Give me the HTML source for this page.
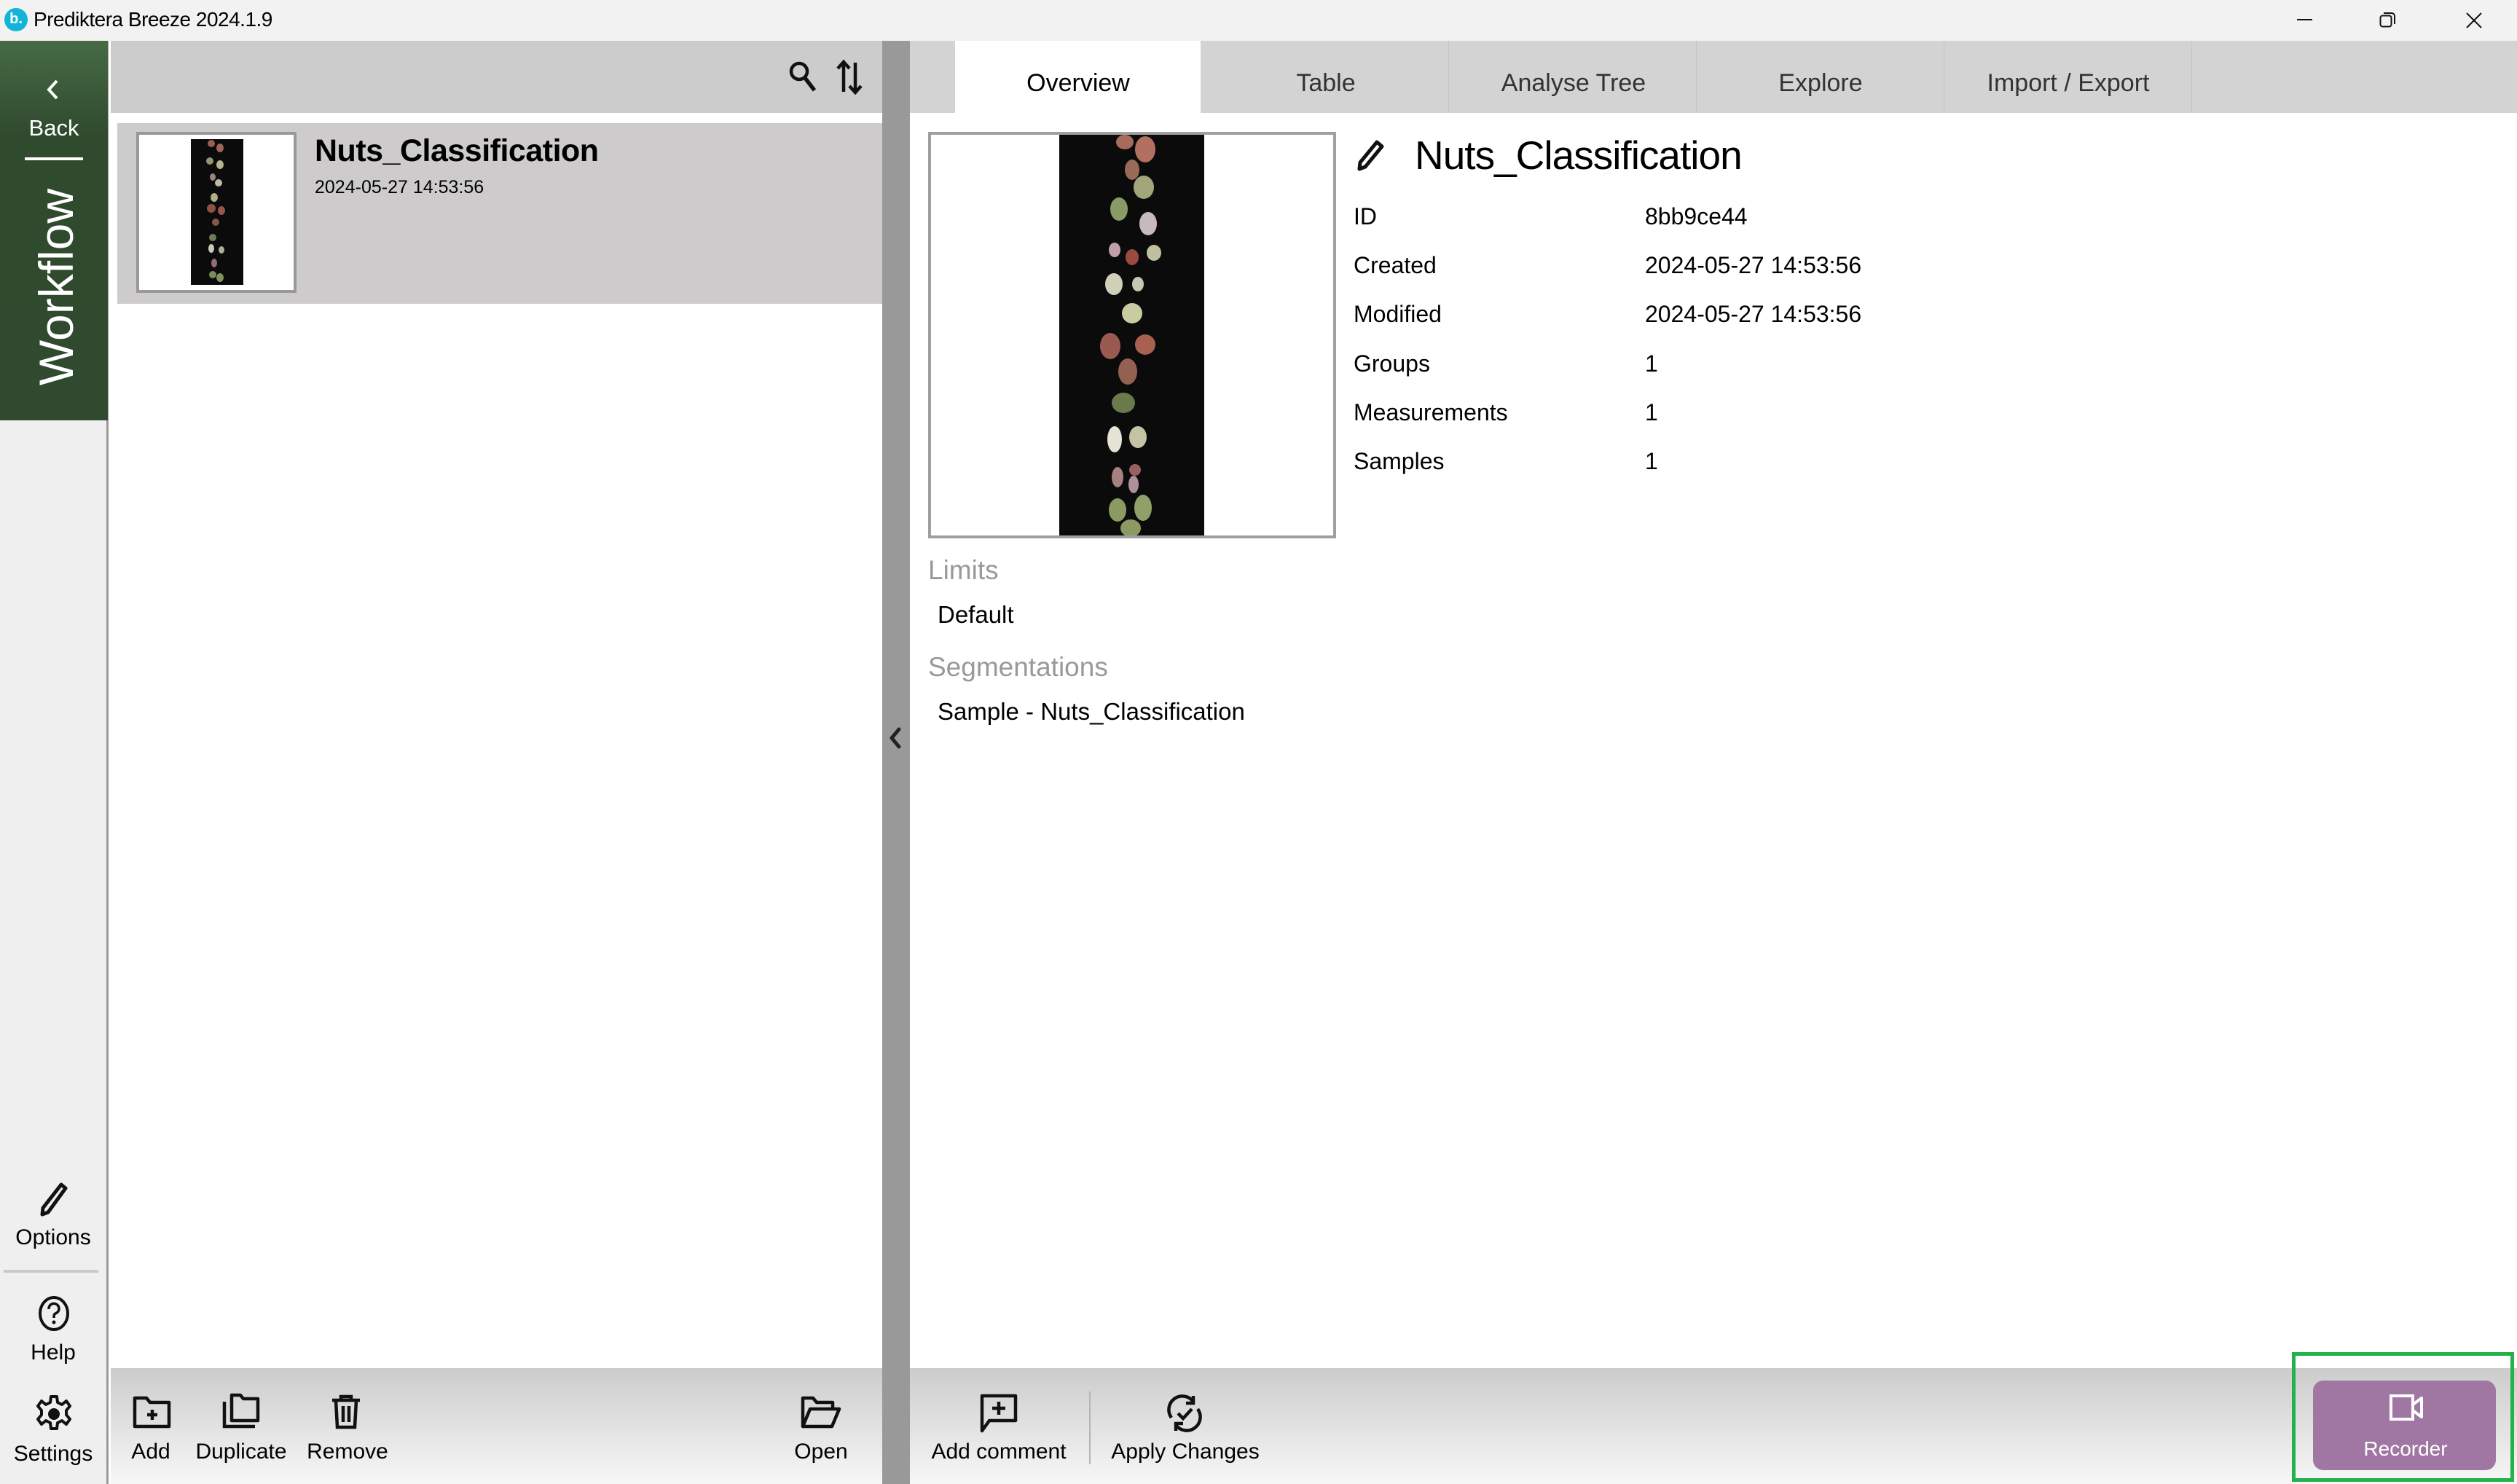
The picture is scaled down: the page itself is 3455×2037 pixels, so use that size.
<!DOCTYPE html>
<html><head><meta charset="utf-8"><style>
*{margin:0;padding:0;box-sizing:border-box}
body{width:3455px;height:2037px;overflow:hidden;background:#fff;font-family:"Liberation Sans",Tahoma,sans-serif;color:#000;position:relative}
.a{position:absolute;white-space:nowrap;line-height:1}
.c{transform:translateX(-50%)}
</style></head><body>
<!-- title bar -->
<div class="a" style="left:0;top:0;width:3455px;height:56px;background:#f2f2f2"></div>
<div class="a" style="left:6px;top:11px;width:32px;height:32px;border-radius:50%;background:#10b4d6;color:#fff;font-size:20px;font-weight:bold;text-align:center;line-height:30px">b.</div>
<div class="a" style="left:46px;top:13px;font-size:28px;letter-spacing:-0.5px">Prediktera Breeze 2024.1.9</div>
<div class="a" style="left:3153px;top:26px;width:21px;height:2px;background:#111"></div>
<svg class="a" style="left:3266px;top:16px" width="24" height="22" viewBox="0 0 24 22"><rect x="1.5" y="5.5" width="15" height="15" rx="3" fill="none" stroke="#111" stroke-width="2"/><path d="M6 2h11a4 4 0 0 1 4 4v11" fill="none" stroke="#111" stroke-width="2"/></svg>
<svg class="a" style="left:3385px;top:17px" width="22" height="22" viewBox="0 0 22 22"><path d="M1 1L21 21M21 1L1 21" stroke="#111" stroke-width="2"/></svg>

<!-- sidebar -->
<div class="a" style="left:0;top:56px;width:149px;height:1981px;background:#efefef;border-right:3px solid #9a9a9a"></div>
<div class="a" style="left:0;top:56px;width:148px;height:521px;background:linear-gradient(#466b45,#304a2e 25%,#2f4a2e)"></div>
<svg class="a" style="left:60px;top:108px" width="24" height="30" viewBox="0 0 24 30"><path d="M18 3L7 15l11 12" fill="none" stroke="#fff" stroke-width="4"/></svg>
<div class="a c" style="left:74px;top:160px;font-size:31px;color:#fff">Back</div>
<div class="a" style="left:34px;top:216px;width:80px;height:4px;background:#fff"></div>
<div class="a" style="left:77px;top:394px;font-size:66px;color:#fff;transform:translate(-50%,-50%) rotate(-90deg)">Workflow</div>
<svg class="a" style="left:54px;top:1622px" width="40" height="48" viewBox="0 0 40 48"><path d="M30 4l6 5L12 42l-8 3 1-9z" fill="none" stroke="#111" stroke-width="5" stroke-linejoin="round"/></svg>
<div class="a c" style="left:73px;top:1684px;font-size:30px">Options</div>
<div class="a" style="left:5px;top:1743px;width:130px;height:4px;background:#c9c9c9"></div>
<svg class="a" style="left:52px;top:1778px" width="44" height="50" viewBox="0 0 44 50"><ellipse cx="22" cy="25" rx="19" ry="22" fill="none" stroke="#111" stroke-width="4"/><path d="M15 19a7 7 0 1 1 9 6c-2 1-2 3-2 6" fill="none" stroke="#111" stroke-width="3.5"/><circle cx="22" cy="37" r="2.5" fill="#111"/></svg>
<div class="a c" style="left:73px;top:1842px;font-size:30px">Help</div>
<svg class="a" style="left:50px;top:1915px" width="48" height="52" viewBox="0 0 48 52"><path d="M20 2h8l1 8 6 3 6-5 5 7-5 6v6l5 6-5 7-6-5-6 3-1 8h-8l-1-8-6-3-6 5-5-7 5-6v-6l-5-6 5-7 6 5 6-3z" fill="none" stroke="#111" stroke-width="4" stroke-linejoin="round"/><circle cx="24" cy="26" r="8" fill="#111"/></svg>
<div class="a c" style="left:73px;top:1981px;font-size:30px">Settings</div>

<!-- left panel -->
<div class="a" style="left:152px;top:56px;width:1059px;height:99px;background:#cccccc"></div>
<svg class="a" style="left:1082px;top:82px" width="42" height="46" viewBox="0 0 42 46"><circle cx="15" cy="16" r="11" fill="none" stroke="#111" stroke-width="4.5"/><path d="M23 25l13 17" stroke="#111" stroke-width="5.5"/></svg>
<svg class="a" style="left:1146px;top:80px" width="40" height="52" viewBox="0 0 40 52"><path d="M12 46V6M4 14l8-9 8 9M28 6v40M20 38l8 9 8-9" fill="none" stroke="#111" stroke-width="4.5"/></svg>
<div class="a" style="left:161px;top:169px;width:1050px;height:248px;background:#cdcbcc"></div>
<div class="a" style="left:187px;top:181px;width:220px;height:221px;background:#fff;border:4px solid #999"></div>
<div class="a" style="left:262px;top:191px;width:72px;height:200px;background:#0b0b0c">
<svg width="72" height="200" viewBox="0 0 72 200"><g opacity=".9"><ellipse cx="28" cy="6" rx="5" ry="5" fill="#a86a5a"/><ellipse cx="40" cy="12" rx="5" ry="6" fill="#b07060"/><ellipse cx="26" cy="30" rx="5" ry="5" fill="#a0a67a"/><ellipse cx="40" cy="35" rx="5" ry="6" fill="#c8c8a0"/><ellipse cx="30" cy="52" rx="4" ry="5" fill="#b09090"/><ellipse cx="38" cy="60" rx="5" ry="5" fill="#d0d0b8"/><ellipse cx="32" cy="80" rx="5" ry="6" fill="#c0c098"/><ellipse cx="28" cy="95" rx="6" ry="6" fill="#9a5a4a"/><ellipse cx="42" cy="98" rx="5" ry="6" fill="#a66050"/><ellipse cx="34" cy="114" rx="5" ry="5" fill="#94604e"/><ellipse cx="30" cy="135" rx="5" ry="5" fill="#7a8a5a"/><ellipse cx="28" cy="150" rx="4" ry="6" fill="#e0e0d0"/><ellipse cx="42" cy="152" rx="4" ry="5" fill="#c0c0a0"/><ellipse cx="32" cy="170" rx="4" ry="6" fill="#a07880"/><ellipse cx="30" cy="186" rx="5" ry="5" fill="#8a9a60"/><ellipse cx="40" cy="190" rx="5" ry="6" fill="#90a068"/></g></svg></div>
<div class="a" style="left:432px;top:186px;font-size:43px;font-weight:bold;letter-spacing:-0.5px">Nuts_Classification</div>
<div class="a" style="left:432px;top:245px;font-size:25px">2024-05-27 14:53:56</div>

<!-- splitter -->
<div class="a" style="left:1211px;top:56px;width:38px;height:1981px;background:#999"></div>
<svg class="a" style="left:1216px;top:996px" width="26" height="34" viewBox="0 0 26 34"><path d="M18 5L8 17l10 12" fill="none" stroke="#222" stroke-width="5" stroke-linecap="round" stroke-linejoin="round"/></svg>

<!-- tabs -->
<div class="a" style="left:1249px;top:56px;width:2206px;height:99px;background:#d3d3d3"></div>
<div class="a" style="left:1311px;top:56px;width:337px;height:99px;background:#fff"></div>
<div class="a" style="left:1988px;top:56px;width:1px;height:99px;background:#c6c6c6"></div>
<div class="a" style="left:2328px;top:56px;width:1px;height:99px;background:#c6c6c6"></div>
<div class="a" style="left:2668px;top:56px;width:1px;height:99px;background:#c6c6c6"></div>
<div class="a" style="left:3008px;top:56px;width:1px;height:99px;background:#c6c6c6"></div>
<div class="a c" style="left:1480px;top:97px;font-size:34px">Overview</div>
<div class="a c" style="left:1820px;top:97px;font-size:34px;color:#333">Table</div>
<div class="a c" style="left:2160px;top:97px;font-size:34px;color:#333">Analyse Tree</div>
<div class="a c" style="left:2499px;top:97px;font-size:34px;color:#333">Explore</div>
<div class="a c" style="left:2839px;top:97px;font-size:34px;color:#333">Import / Export</div>

<!-- overview -->
<div class="a" style="left:1274px;top:181px;width:560px;height:558px;background:#fff;border:4px solid #a0a0a0"></div>
<div class="a" style="left:1454px;top:185px;width:199px;height:550px;background:#0b0b0c">
<svg width="199" height="550" viewBox="0 0 199 550"><g><ellipse cx="90" cy="10" rx="12" ry="10" fill="#a86a5a"/><ellipse cx="118" cy="20" rx="14" ry="18" fill="#b27060"/><ellipse cx="100" cy="48" rx="10" ry="14" fill="#9a6a58"/><ellipse cx="116" cy="72" rx="14" ry="16" fill="#a0a67a"/><ellipse cx="82" cy="102" rx="12" ry="16" fill="#8a9a66"/><ellipse cx="122" cy="122" rx="12" ry="16" fill="#c8b8c0"/><ellipse cx="76" cy="158" rx="8" ry="10" fill="#c0a0a8"/><ellipse cx="100" cy="168" rx="9" ry="11" fill="#9a4a40"/><ellipse cx="130" cy="162" rx="10" ry="11" fill="#c0c0a0"/><ellipse cx="75" cy="205" rx="12" ry="15" fill="#d0d0b8"/><ellipse cx="108" cy="205" rx="8" ry="10" fill="#c8c8b0"/><ellipse cx="100" cy="245" rx="14" ry="14" fill="#c8cca0"/><ellipse cx="70" cy="290" rx="14" ry="18" fill="#9a5a50"/><ellipse cx="118" cy="288" rx="14" ry="14" fill="#a86050"/><ellipse cx="94" cy="325" rx="13" ry="18" fill="#946050"/><ellipse cx="88" cy="368" rx="16" ry="14" fill="#6a7a4a"/><ellipse cx="76" cy="418" rx="10" ry="18" fill="#e4e4d4"/><ellipse cx="108" cy="415" rx="12" ry="15" fill="#c4c4a4"/><ellipse cx="80" cy="470" rx="8" ry="14" fill="#a88080"/><ellipse cx="104" cy="460" rx="8" ry="8" fill="#9a6060"/><ellipse cx="102" cy="480" rx="7" ry="12" fill="#b09098"/><ellipse cx="80" cy="515" rx="12" ry="16" fill="#8a9a60"/><ellipse cx="115" cy="512" rx="12" ry="18" fill="#90a068"/><ellipse cx="98" cy="540" rx="14" ry="12" fill="#8a9a62"/></g></svg></div>
<svg class="a" style="left:1862px;top:192px" width="40" height="44" viewBox="0 0 40 44"><path d="M28 3l7 6L12 37l-8 3 1-9z" fill="none" stroke="#111" stroke-width="5" stroke-linejoin="round"/></svg>
<div class="a" style="left:1942px;top:186px;font-size:55px;letter-spacing:-1px">Nuts_Classification</div>
<div class="a" style="left:1858px;top:281px;font-size:32px">ID</div>
<div class="a" style="left:1858px;top:348px;font-size:32px">Created</div>
<div class="a" style="left:1858px;top:415px;font-size:32px">Modified</div>
<div class="a" style="left:1858px;top:483px;font-size:32px">Groups</div>
<div class="a" style="left:1858px;top:550px;font-size:32px">Measurements</div>
<div class="a" style="left:1858px;top:617px;font-size:32px">Samples</div>
<div class="a" style="left:2258px;top:281px;font-size:32px">8bb9ce44</div>
<div class="a" style="left:2258px;top:348px;font-size:32px">2024-05-27 14:53:56</div>
<div class="a" style="left:2258px;top:415px;font-size:32px">2024-05-27 14:53:56</div>
<div class="a" style="left:2258px;top:483px;font-size:32px">1</div>
<div class="a" style="left:2258px;top:550px;font-size:32px">1</div>
<div class="a" style="left:2258px;top:617px;font-size:32px">1</div>
<div class="a" style="left:1274px;top:764px;font-size:37px;color:#999">Limits</div>
<div class="a" style="left:1287px;top:827px;font-size:33px">Default</div>
<div class="a" style="left:1274px;top:897px;font-size:37px;color:#999">Segmentations</div>
<div class="a" style="left:1287px;top:960px;font-size:33px">Sample - Nuts_Classification</div>

<!-- bottom bars -->
<div class="a" style="left:152px;top:1878px;width:1059px;height:159px;background:linear-gradient(#cccccc,#f7f7f7)"></div>
<div class="a" style="left:1249px;top:1878px;width:2206px;height:159px;background:linear-gradient(#cccccc,#f7f7f7)"></div>
<svg class="a" style="left:182px;top:1916px" width="54" height="46" viewBox="0 0 54 46"><path d="M3 3h16l5 6h26v33H3z" fill="none" stroke="#111" stroke-width="4.5" stroke-linejoin="round"/><path d="M27 19v14M20 26h14" stroke="#111" stroke-width="4.5"/></svg>
<div class="a c" style="left:207px;top:1978px;font-size:30px">Add</div>
<svg class="a" style="left:302px;top:1912px" width="58" height="50" viewBox="0 0 58 50"><path d="M16 3h12l4 5h20v30H16z" fill="none" stroke="#111" stroke-width="4.5" stroke-linejoin="round"/><path d="M6 12v34h42" fill="none" stroke="#111" stroke-width="4.5"/></svg>
<div class="a c" style="left:331px;top:1978px;font-size:30px">Duplicate</div>
<svg class="a" style="left:452px;top:1914px" width="46" height="48" viewBox="0 0 46 48"><path d="M4 8h38M16 8V3h14v5M9 8l2 37h24l2-37M19 16v22M27 16v22" fill="none" stroke="#111" stroke-width="4.5"/></svg>
<div class="a c" style="left:477px;top:1978px;font-size:30px">Remove</div>
<svg class="a" style="left:1098px;top:1916px" width="58" height="46" viewBox="0 0 58 46"><path d="M4 42V3h14l5 6h22v8M4 42l10-24h40l-10 24z" fill="none" stroke="#111" stroke-width="4.5" stroke-linejoin="round"/></svg>
<div class="a c" style="left:1127px;top:1978px;font-size:30px">Open</div>
<svg class="a" style="left:1344px;top:1912px" width="54" height="56" viewBox="0 0 54 56"><path d="M4 52V4h46v34H14z" fill="none" stroke="#111" stroke-width="4.5" stroke-linejoin="round"/><path d="M27 12v18M18 21h18" stroke="#111" stroke-width="4.5"/></svg>
<div class="a c" style="left:1371px;top:1978px;font-size:30px">Add comment</div>
<div class="a" style="left:1495px;top:1910px;width:2px;height:100px;background:#b5b5b5"></div>
<svg class="a" style="left:1598px;top:1912px" width="56" height="56" viewBox="0 0 56 56"><path d="M10 34A18 18 0 0 1 40 12M46 22A18 18 0 0 1 16 44" fill="none" stroke="#111" stroke-width="4.5"/><path d="M40 4v10H30M16 52V42h10" fill="none" stroke="#111" stroke-width="4.5"/><path d="M19 28l7 7 12-13" fill="none" stroke="#111" stroke-width="4.5"/></svg>
<div class="a c" style="left:1627px;top:1978px;font-size:30px">Apply Changes</div>

<!-- recorder -->
<div class="a" style="left:3146px;top:1856px;width:305px;height:178px;border:5px solid #22b14c"></div>
<div class="a" style="left:3175px;top:1895px;width:251px;height:123px;background:#a077a3;border-radius:14px"></div>
<svg class="a" style="left:3280px;top:1914px" width="46" height="36" viewBox="0 0 46 36"><rect x="2" y="2" width="30" height="32" fill="none" stroke="#fff" stroke-width="4"/><path d="M32 14l12-9v26l-12-9" fill="none" stroke="#fff" stroke-width="4" stroke-linejoin="round"/></svg>
<div class="a c" style="left:3302px;top:1975px;font-size:28px;color:#fff">Recorder</div>
</body></html>
